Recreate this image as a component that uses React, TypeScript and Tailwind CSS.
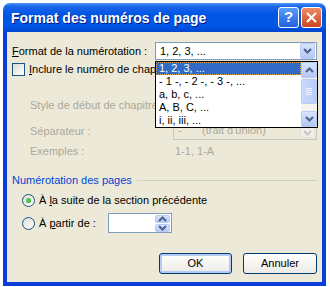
import React from "react";

const Chevron: React.FC<{ up?: boolean; color?: string }> = ({ up = false, color = "#4D6185" }) => (
  <svg width="9" height="6" viewBox="0 0 9 6" className={up ? "rotate-180" : ""}>
    <path d="M1 1 L4.5 4.5 L8 1" fill="none" stroke={color} strokeWidth="2" />
  </svg>
);

const ArrowBtn: React.FC<{ up?: boolean; className?: string; disabled?: boolean }> = ({ up, className = "", disabled }) => (
  <div
    className={
      "flex items-center justify-center rounded-[2px] border " +
      (disabled
        ? "border-[#E2E1DA] bg-[#F0EFEA] "
        : "border-[#B9CBF3] bg-linear-to-b from-[#D8E4FD] to-[#B3C8F6] ") +
      className
    }
  >
    <Chevron up={up} color={disabled ? "#C9C7BA" : "#4D6185"} />
  </div>
);

const Checkbox: React.FC = () => (
  <div className="w-[13px] h-[13px] border border-[#1C5180] bg-linear-to-br from-[#DCDCD7] to-white" />
);

const Radio: React.FC<{ checked?: boolean }> = ({ checked }) => (
  <div className="w-[13px] h-[13px] rounded-full border border-[#1C5180] bg-linear-to-br from-[#DCDCD7] to-white flex items-center justify-center">
    {checked && <div className="w-[5px] h-[5px] rounded-full bg-[radial-gradient(circle_at_40%_40%,#5EDB5E,#1A9A1A)]" />}
  </div>
);

const XPButton: React.FC<{ label: string; w: string; focus?: boolean }> = ({ label, w, focus }) => (
  <div
    className={
      "h-[21px] rounded-[3px] border border-[#003C74] flex items-center justify-center bg-linear-to-b from-white to-[#ECEBE6] " +
      w +
      (focus ? " shadow-[inset_0_0_0_2px_#B3CBF6]" : "")
    }
  >
    {label}
  </div>
);

const items = ["1, 2, 3, ...", "- 1 -, - 2 -, - 3 -, ...", "a, b, c, ...", "A, B, C, ...", "i, ii, iii, ..."];

export default function App() {
  return (
    <div className="w-[330px] h-[287px] bg-white overflow-hidden pt-[3px] pl-[3px] font-['Liberation_Sans',sans-serif] text-[11px]">
      <div className="w-[323px] h-[283px] flex flex-col">
        {/* title bar */}
        <div className="h-[29px] rounded-t-[7px] flex items-center pl-[8px] pr-[4px] bg-[linear-gradient(180deg,#4A93FA_0%,#1C66E8_12%,#0055E5_40%,#0056E8_80%,#0045CC_100%)]">
          <span className="text-white font-bold text-[14px] pt-px [text-shadow:1px_1px_0_#0A1883]">Format des numéros de page</span>
          <div className="ml-auto flex gap-[2px]">
            <div className="w-[21px] h-[21px] rounded-[3px] border border-white bg-linear-to-b from-[#5A9BFB] to-[#2260E0] flex items-center justify-center text-white font-bold text-[15px]">
              ?
            </div>
            <div className="w-[21px] h-[21px] rounded-[3px] border border-white bg-linear-to-b from-[#EE8A66] to-[#CC4520] flex items-center justify-center">
              <svg width="11" height="11" viewBox="0 0 11 11">
                <path d="M1 1 L10 10 M10 1 L1 10" stroke="white" strokeWidth="2" />
              </svg>
            </div>
          </div>
        </div>

        {/* body */}
        <div className="relative flex-1 bg-[#ECE9D8] border-x-4 border-b-4 border-[#0B3ED8] px-[5px] pt-[10px] flex flex-col text-black">
          <div className="flex items-center h-[18px]">
            <span>
              <u>F</u>ormat de la numérotation :
            </span>
            <div className="ml-auto w-[162px] h-[18px] bg-white border border-[#7F9DB9] flex items-center pl-[4px] pr-px">
              <span>1, 2, 3, ...</span>
              <ArrowBtn className="ml-auto w-[15px] h-[16px]" />
            </div>
          </div>

          <div className="mt-[3px] h-[13px] flex items-center gap-[4px]">
            <Checkbox />
            <span className="w-[126px] overflow-hidden whitespace-nowrap">
              <u>I</u>nclure le numéro de chapitre
            </span>
          </div>

          <div className="mt-[20px] h-[18px] flex items-center pl-[18px] text-[#ACA899]">
            <span className="w-[125px] overflow-hidden whitespace-nowrap">Style de début de chapitre :</span>
            <div className="ml-auto w-[144px] h-[18px] border border-[#C9C7BA] flex items-center pr-px">
              <ArrowBtn disabled className="ml-auto w-[15px] h-[16px]" />
            </div>
          </div>

          <div className="mt-[8px] h-[18px] flex items-center pl-[18px] text-[#ACA899]">
            <span>Séparateur :</span>
            <div className="ml-auto w-[144px] h-[18px] border border-[#C9C7BA] flex items-end pb-px pl-[4px] pr-px">
              <span className="w-[24px]">-</span>
              <span>(trait d'union)</span>
              <ArrowBtn disabled className="ml-auto w-[15px] h-[11px]" />
            </div>
          </div>

          <div className="mt-[2px] h-[18px] flex items-center pl-[18px] text-[#ACA899]">
            <span className="w-[145px]">Exemples :</span>
            <span>1-1, 1-A</span>
          </div>

          <div className="mt-[12px] h-[16px] flex items-center">
            <span className="text-[#0046D5]">Numérotation des pages</span>
            <div className="flex-1 h-px bg-[#D0D0BF] ml-[5px]" />
          </div>

          <div className="mt-[4px] h-[16px] flex items-center pl-[10px] gap-[4px]">
            <Radio checked />
            <span>
              À <u>l</u>a suite de la section précédente
            </span>
          </div>

          <div className="mt-[5px] h-[20px] flex items-center pl-[10px]">
            <Radio />
            <span className="w-[73px] pl-[4px]">
              À <u>p</u>artir de :
            </span>
            <div className="w-[64px] h-[20px] bg-white border border-[#7F9DB9] flex justify-end p-px">
              <div className="w-[15px] flex flex-col gap-px">
                <ArrowBtn up className="flex-1" />
                <ArrowBtn className="flex-1" />
              </div>
            </div>
          </div>

          <div className="mt-[20px] flex justify-end gap-[11px]">
            <XPButton label="OK" w="w-[73px]" focus />
            <XPButton label="Annuler" w="w-[74px]" />
          </div>

          {/* open drop-down list */}
          <div className="absolute left-[148px] top-[29px] w-[163px] h-[67px] border border-black bg-white flex">
            <div className="flex-1 flex flex-col">
              {items.map((t, i) => (
                <div
                  key={t}
                  className={
                    "h-[13px] leading-[13px] pl-[3px] whitespace-nowrap " +
                    (i === 0 ? "bg-[#316AC5] text-white outline-1 outline-dotted outline-[#E8A94E] -outline-offset-1" : "")
                  }
                >
                  {t}
                </div>
              ))}
            </div>
            <div className="w-[16px] flex flex-col bg-[#F4F3EE]">
              <ArrowBtn up className="h-[16px]" />
              <div className="mt-px h-[25px] rounded-[2px] border border-[#B9CBF3] bg-linear-to-r from-[#C9D8FC] to-[#B8CCF8] flex flex-col items-center justify-center gap-px">
                <div className="w-[6px] h-px bg-[#EEF3FE]" />
                <div className="w-[6px] h-px bg-[#EEF3FE]" />
                <div className="w-[6px] h-px bg-[#EEF3FE]" />
                <div className="w-[6px] h-px bg-[#EEF3FE]" />
              </div>
              <ArrowBtn className="mt-auto h-[16px]" />
            </div>
          </div>
        </div>
      </div>
    </div>
  );
}
